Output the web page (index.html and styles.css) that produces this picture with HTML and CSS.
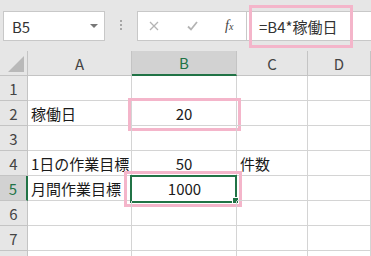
FILE: index.html
```html
<!DOCTYPE html>
<html lang="ja">

<head>
    <meta charset="UTF-8">
    <title>稼働日 - Sheet</title>
    <link rel="stylesheet" href="styles.css">
</head>

<body>
    <div class="toolbar">
        <div class="name-box">
            <span>B5</span>
            <span class="drop"></span>
        </div>
        <div class="grip"><i></i><i></i><i></i></div>
        <div class="fx-buttons">
            <svg class="btn-icon" width="10" height="10" viewBox="0 0 10 10">
                <path d="M1 1 L9 9 M9 1 L1 9" stroke="#b4b4b4" stroke-width="1.3" fill="none" />
            </svg>
            <svg class="btn-icon" width="11" height="10" viewBox="0 0 11 10">
                <path d="M1 5.5 L4 8.5 L10 1" stroke="#b4b4b4" stroke-width="1.8" fill="none" />
            </svg>
            <span class="fx">f<sub>x</sub></span>
        </div>
        <div class="formula">
            <span>=B4*稼働日</span>
            <div class="mark mark-formula"></div>
        </div>
    </div>

    <div class="sheet">
        <div class="hd corner"><span class="tri"></span></div>
        <div class="hd col">A</div>
        <div class="hd col active">B</div>
        <div class="hd col">C</div>
        <div class="hd col">D</div>

        <div class="hd row">1</div>
        <div class="cell"></div>
        <div class="cell"></div>
        <div class="cell"></div>
        <div class="cell"></div>

        <div class="hd row">2</div>
        <div class="cell">稼働日</div>
        <div class="cell num">20<div class="mark mark-b2"></div></div>
        <div class="cell"></div>
        <div class="cell"></div>

        <div class="hd row">3</div>
        <div class="cell"></div>
        <div class="cell"></div>
        <div class="cell"></div>
        <div class="cell"></div>

        <div class="hd row">4</div>
        <div class="cell">1日の作業目標</div>
        <div class="cell num">50</div>
        <div class="cell">件数</div>
        <div class="cell"></div>

        <div class="hd row active">5</div>
        <div class="cell">月間作業目標</div>
        <div class="cell num selected">1000<div class="mark mark-b5"></div></div>
        <div class="cell"></div>
        <div class="cell"></div>

        <div class="hd row">6</div>
        <div class="cell"></div>
        <div class="cell"></div>
        <div class="cell"></div>
        <div class="cell"></div>

        <div class="hd row">7</div>
        <div class="cell"></div>
        <div class="cell"></div>
        <div class="cell"></div>
        <div class="cell"></div>

        <div class="hd row"></div>
        <div class="cell"></div>
        <div class="cell"></div>
        <div class="cell"></div>
        <div class="cell"></div>
    </div>
</body>

</html>
```

FILE: styles.css
```css
:root {
    --excel-green: #217346;
    --grid-line: #d4d4d4;
    --header-bg: #e6e6e6;
    --header-line: #c4c4c4;
    --header-active: #d2d2d2;
    --mark-pink: #f4b5ca;
    --font-family: "Noto Sans CJK JP", "Noto Sans", sans-serif;
}

html,
body {
    margin: 0;
    padding: 0;
    height: 100%;
    overflow: hidden;
}

body {
    font-family: var(--font-family);
    background: #ffffff;
    color: #222;
}

/* formula bar */
.toolbar {
    display: flex;
    align-items: flex-start;
    height: 51px;
    padding: 11px 0 0 3px;
    box-sizing: border-box;
    background: var(--header-bg);
}

.name-box {
    display: flex;
    align-items: center;
    justify-content: space-between;
    width: 102px;
    height: 30px;
    padding: 0 6px 0 8px;
    box-sizing: border-box;
    background: #fff;
    border: 1px solid #c8c8c8;
    font-size: 15px;
    color: #333;
}

.drop {
    width: 0;
    height: 0;
    border-left: 4px solid transparent;
    border-right: 4px solid transparent;
    border-top: 4px solid #777;
}

.grip {
    display: flex;
    flex-direction: column;
    gap: 2px;
    width: 32px;
    padding-top: 9px;
    align-items: center;
}

.grip i {
    width: 2px;
    height: 2px;
    background: #a6a6a6;
}

.fx-buttons {
    display: flex;
    align-items: center;
    width: 109px;
    height: 30px;
    padding-left: 11px;
    gap: 28px;
    box-sizing: border-box;
    background: #fff;
    border: 1px solid #c8c8c8;
    border-right: none;
}

.fx {
    font-family: "Liberation Serif", serif;
    font-style: italic;
    font-size: 14px;
    color: #444;
    margin-left: -1px;
}

.fx sub {
    font-size: 10px;
    vertical-align: 0;
}

.formula {
    position: relative;
    flex: 1;
    height: 30px;
    display: flex;
    align-items: center;
    padding-left: 12px;
    box-sizing: border-box;
    background: #fff;
    border: 1px solid #c8c8c8;
    border-right: none;
    font-size: 15px;
    color: #333;
}

/* pink annotation frames */
.mark {
    position: absolute;
    border: 3px solid var(--mark-pink);
    box-sizing: border-box;
    pointer-events: none;
}

.mark-formula {
    left: 2px;
    top: -7px;
    width: 104px;
    height: 43px;
}

.mark-b2 {
    left: -4px;
    top: -3px;
    right: -5px;
    bottom: -6px;
}

.mark-b5 {
    left: -8px;
    top: -5px;
    right: -5px;
    bottom: -6px;
}

/* grid */
.sheet {
    display: grid;
    grid-template-columns: 28px 104px 105px 71px 1fr;
    grid-auto-rows: 25px;
    font-size: 15px;
}

.hd {
    display: flex;
    align-items: center;
    justify-content: center;
    background: var(--header-bg);
    color: #444;
    border-right: 1px solid var(--header-line);
    border-bottom: 1px solid var(--header-line);
    box-sizing: border-box;
}

.corner {
    position: relative;
}

.tri {
    position: absolute;
    right: 3px;
    bottom: 3px;
    width: 0;
    height: 0;
    border-left: 16px solid transparent;
    border-bottom: 16px solid #b9b9b9;
}

.hd.col.active {
    background: var(--header-active);
    color: var(--excel-green);
    border-bottom: 2px solid var(--excel-green);
}

.hd.row.active {
    background: var(--header-active);
    color: var(--excel-green);
    border-right: 2px solid var(--excel-green);
}

.cell {
    position: relative;
    display: flex;
    align-items: center;
    padding-left: 3px;
    border-right: 1px solid var(--grid-line);
    border-bottom: 1px solid var(--grid-line);
    box-sizing: border-box;
    white-space: nowrap;
    color: #1a1a1a;
}

.cell.num {
    justify-content: center;
    padding-left: 0;
}

.selected {
    border: none;
}

.selected::before {
    content: "";
    position: absolute;
    left: -2px;
    top: -1px;
    right: 0;
    bottom: -2px;
    border: 2px solid var(--excel-green);
}

.selected::after {
    content: "";
    position: absolute;
    right: -2px;
    bottom: -3px;
    width: 5px;
    height: 5px;
    background: var(--excel-green);
    border: 1px solid #fff;
}
```
